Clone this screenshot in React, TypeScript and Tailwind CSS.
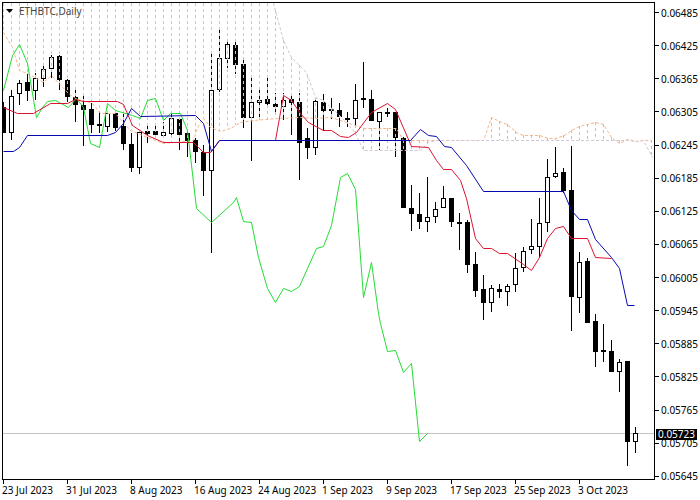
const font = "font-['Noto_Sans','Liberation_Sans',sans-serif]";

// body top, body bottom, high, low, bearish
type Candle = [number, number, number, number, number];

const candles: Candle[] = [
  [107, 133, 102, 133, 1], [96, 133, 90, 140, 0], [83, 94, 80, 105, 0], [82, 91, 74, 101, 1],
  [78, 91, 73, 100, 0], [69, 79, 65, 87, 0], [57, 69, 55, 78, 0], [56, 80, 55, 90, 1],
  [80, 97, 79, 102, 1], [97, 105, 88, 122, 1], [105, 110, 93, 146, 1], [109, 125, 103, 133, 1],
  [124, 125, 112, 133, 1], [113, 127, 112, 132, 0], [113, 128, 112, 131, 1], [126, 144, 112, 150, 1],
  [144, 168, 133, 172, 1], [132, 168, 132, 174, 0], [131, 134, 125, 143, 1], [131, 135, 125, 138, 1],
  [132, 136, 122, 138, 0], [118, 134, 113, 137, 0], [119, 135, 117, 150, 1], [133, 141, 131, 157, 1],
  [140, 152, 138, 163, 1], [152, 171, 145, 196, 1], [90, 171, 52, 253, 0], [58, 90, 28, 92, 0],
  [44, 59, 41, 68, 0], [45, 65, 41, 74, 1], [64, 118, 60, 128, 1], [102, 118, 75, 161, 0],
  [100, 103, 90, 120, 0], [99, 104, 78, 107, 1], [104, 107, 93, 113, 1], [100, 107, 93, 120, 0],
  [99, 103, 95, 135, 1], [102, 143, 93, 180, 1], [138, 148, 128, 159, 1], [101, 148, 98, 155, 0],
  [102, 111, 94, 131, 1], [109, 110, 98, 119, 1], [110, 117, 103, 127, 1], [118, 119, 112, 127, 1],
  [100, 119, 84, 126, 0], [98, 100, 62, 108, 0], [99, 121, 90, 121, 1], [112, 122, 112, 150, 0],
  [112, 113, 108, 117, 1], [112, 138, 112, 157, 1], [138, 208, 137, 208, 1], [208, 214, 185, 231, 1],
  [214, 222, 193, 229, 1], [217, 222, 177, 232, 0], [209, 217, 202, 223, 0], [198, 208, 186, 208, 0],
  [198, 222, 198, 227, 1], [222, 223, 213, 250, 1], [222, 265, 220, 273, 1], [264, 291, 252, 297, 1],
  [289, 303, 275, 320, 1], [288, 303, 285, 312, 0], [289, 292, 284, 298, 1], [286, 292, 284, 306, 0],
  [268, 285, 253, 292, 0], [251, 268, 247, 272, 0], [246, 250, 219, 254, 0], [223, 247, 198, 258, 0],
  [177, 223, 159, 232, 0], [173, 177, 147, 178, 0], [172, 191, 168, 193, 1], [190, 297, 146, 331, 1],
  [262, 298, 252, 313, 0], [261, 323, 258, 323, 1], [321, 352, 314, 367, 1], [350, 352, 324, 362, 1],
  [351, 372, 340, 372, 1], [362, 372, 359, 392, 0], [361, 442, 361, 466, 1], [433, 442, 427, 453, 0],
];

type Pt = [number, number];

const kijun: Pt[] = [
  [3, 151], [13, 151], [19, 147], [27, 135], [107, 135], [115, 132], [123, 123], [131, 108], [140, 116], [195, 115],
  [203, 123], [211, 151], [219, 140], [410, 140], [420, 129], [428, 135], [436, 136], [444, 146], [451, 147],
  [466, 165], [483, 191], [563, 191], [571, 210], [579, 219], [587, 219], [595, 239], [611, 257], [619, 268],
  [627, 305], [634, 305],
];

const tenkan: Pt[] = [
  [3, 107], [17, 113], [33, 113], [50, 103], [67, 103], [75, 99], [83, 101], [117, 101], [123, 104], [132, 125],
  [147, 135], [163, 142], [193, 142], [203, 152], [210, 152], [219, 140], [275, 140], [283, 95], [291, 100], [300, 113],
  [308, 122], [323, 130], [331, 130], [340, 136], [348, 137], [356, 132], [371, 112], [387, 103], [395, 109],
  [411, 146], [428, 147], [436, 160], [443, 169], [451, 169], [460, 180], [466, 198], [475, 238], [483, 248],
  [491, 248], [499, 253], [507, 253], [523, 264], [531, 270], [539, 257], [547, 238], [555, 228], [563, 226],
  [571, 238], [587, 238], [595, 257], [611, 258],
];

const chikou: Pt[] = [
  [3, 90], [12, 55], [19, 44], [27, 63], [36, 117], [42, 107], [47, 101], [55, 100], [68, 107], [76, 98], [83, 107],
  [90, 143], [99, 147], [107, 103], [115, 110], [132, 115], [140, 118], [147, 100], [155, 98], [163, 120], [170, 113],
  [180, 113], [187, 130], [196, 208], [211, 222], [233, 202], [236, 197], [243, 221], [251, 222], [258, 257],
  [267, 288], [275, 302], [283, 288], [291, 291], [299, 286], [307, 268], [316, 248], [323, 246], [331, 225],
  [340, 177], [347, 173], [355, 189], [363, 297], [371, 262], [378, 313], [380, 323], [387, 351], [395, 350],
  [403, 372], [411, 363], [419, 441], [427, 433],
];

const spanA: Pt[] = [
  [3, 32], [12, 47], [19, 70], [27, 73], [43, 82], [51, 75], [68, 93], [75, 98], [92, 103], [100, 113], [115, 113],
  [130, 130], [147, 137], [163, 143], [193, 140], [197, 127], [203, 118], [210, 127], [220, 131], [230, 128], [240, 122],
  [253, 120], [277, 118], [300, 117], [315, 118], [331, 117], [346, 122], [363, 128], [396, 128], [403, 140], [483, 140],
  [491, 117], [499, 121], [507, 124], [516, 132], [523, 135], [539, 135], [548, 138], [555, 138], [564, 135], [571, 130],
  [579, 126], [587, 124], [595, 122], [603, 124], [611, 137], [619, 143], [627, 139], [636, 141], [643, 140], [651, 140],
];

const spanB: Pt[] = [
  [3, -5], [270, -5], [273, 3], [283, 40], [291, 57], [306, 72], [315, 97], [323, 100], [339, 115], [346, 122], [355, 133],
  [363, 150], [420, 150], [428, 142], [435, 140], [627, 140], [636, 141], [643, 140], [652, 157],
];

const pts = (line: Pt[]) => line.map(([x, y]) => `${x + 0.5},${y + 0.5}`).join(" ");

const yAt = (line: Pt[], x: number) => {
  for (let i = 1; i < line.length; i++) {
    if (x <= line[i][0]) {
      const [x0, y0] = line[i - 1];
      const [x1, y1] = line[i];
      return y0 + ((y1 - y0) * (x - x0)) / (x1 - x0);
    }
  }
  return line[line.length - 1][1];
};

const prices = [
  "0.06485", "0.06425", "0.06365", "0.06305", "0.06245", "0.06185", "0.06125", "0.06065",
  "0.06005", "0.05945", "0.05885", "0.05825", "0.05765", "0.05705", "0.05645",
];

const dates = [
  "23 Jul 2023", "31 Jul 2023", "8 Aug 2023", "16 Aug 2023", "24 Aug 2023",
  "1 Sep 2023", "9 Sep 2023", "17 Sep 2023", "25 Sep 2023", "3 Oct 2023",
];

function Chart() {
  return (
    <svg width={651} height={476} viewBox="3 3 651 476" className="block">
      <line x1={3} x2={654} y1={433.5} y2={433.5} stroke="#c4c4c4" />
      {candles.map(([top, bottom, high, low, bear], i) => {
        const x = 3 + 8 * i;
        return (
          <g key={i} shapeRendering="crispEdges">
            <line x1={x + 0.5} x2={x + 0.5} y1={high} y2={low} stroke="#000" />
            <rect
              x={x - 1.5}
              y={top + 0.5}
              width={4}
              height={Math.max(bottom - top - 1, 1)}
              fill={bear ? "#000" : "#fff"}
              stroke="#000"
            />
          </g>
        );
      })}
      {Array.from({ length: 82 }, (_, i) => {
        const x = 3 + 8 * i;
        const a = yAt(spanA, x);
        const b = yAt(spanB, x);
        return (
          <line
            key={i}
            x1={x + 0.5}
            x2={x + 0.5}
            y1={Math.max(Math.min(a, b), 3)}
            y2={Math.max(a, b)}
            stroke={a < b ? "#e6b596" : "#c8c4c8"}
            strokeDasharray="3 3"
            shapeRendering="crispEdges"
          />
        );
      })}
      <polyline points={pts(spanA)} fill="none" stroke="#f4b58a" strokeDasharray="3 2" />
      <polyline points={pts(spanB)} fill="none" stroke="#d5c4d5" strokeDasharray="3 2" />
      <polyline points={pts(chikou)} fill="none" stroke="#24dc34" />
      <polyline points={pts(tenkan)} fill="none" stroke="#dc1430" />
      <polyline points={pts(kijun)} fill="none" stroke="#0808b0" />
    </svg>
  );
}

export default function App() {
  return (
    <div className={`relative flex w-[700px] h-[500px] overflow-hidden bg-white pl-[2px] pt-[2px] text-black ${font}`}>
      <div className="w-[653px] shrink-0">
        <div className="relative h-[478px] border border-black">
          <Chart />
          <div className="absolute left-[3px] top-[1px] flex items-center gap-[6px]">
            <svg width={7} height={4} viewBox="0 0 7 4" className="block">
              <path d="M0 0H7L3.5 4Z" fill="#000" />
            </svg>
            <span className="text-[10px] leading-[14px] text-[#444]">ETHBTC,Daily</span>
          </div>
        </div>
        <div className="flex pl-[1px]">
          {dates.map((d) => (
            <div key={d} className="w-[64px] shrink-0">
              <div className="h-[4px] w-px bg-black" />
              <div className="-ml-[1px] whitespace-nowrap text-[10px] leading-[12px]">{d}</div>
            </div>
          ))}
        </div>
      </div>
      <div className="flex flex-col gap-[13.14px] pt-[0.5px]">
        {prices.map((p) => (
          <div key={p} className="flex h-[20px] items-center gap-[2px]">
            <div className="h-px w-[4px] bg-black" />
            <span className="text-[10px] leading-[12px]">{p}</span>
          </div>
        ))}
      </div>
      <div className="absolute left-[656px] top-[429px] h-[11px] w-[41px] bg-black text-center text-[10px] leading-[11px] text-white">
        0.05723
      </div>
    </div>
  );
}
